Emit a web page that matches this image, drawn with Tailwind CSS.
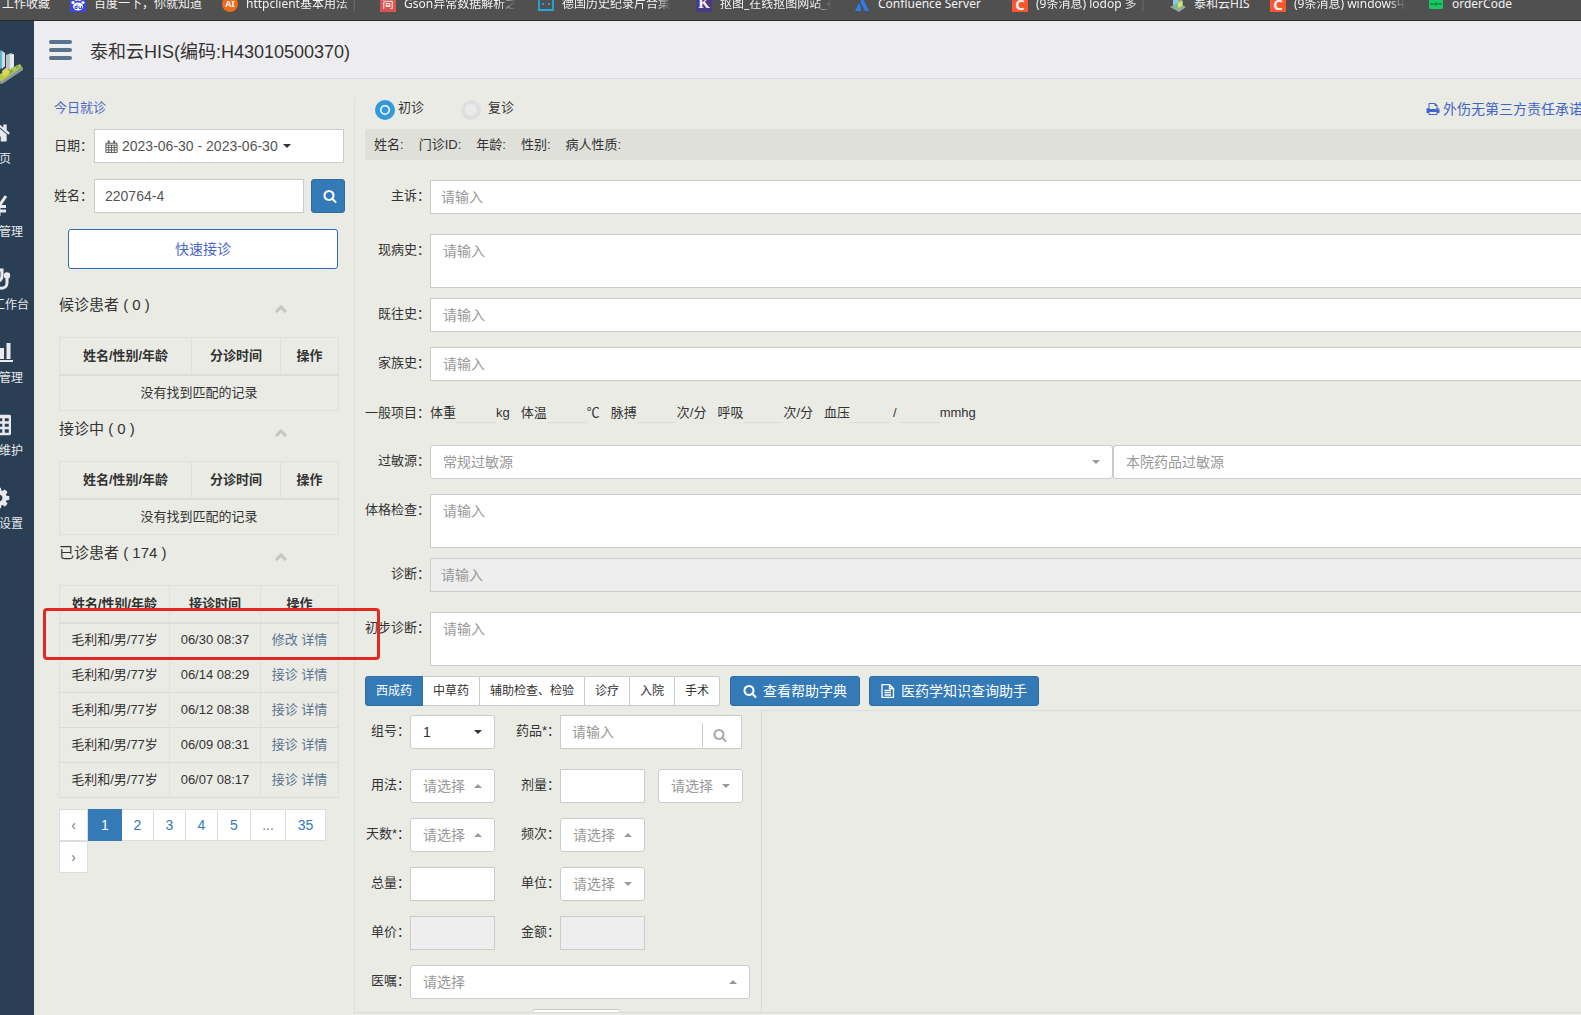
<!DOCTYPE html>
<html lang="zh-CN">
<head>
<meta charset="utf-8">
<meta name="viewport" content="width=device-width, initial-scale=1">
<title>泰和云HIS</title>
<script src="https://cdn.jsdelivr.net/npm/@tailwindcss/browser@4"></script>
</head>
<body class="min-h-screen flex flex-col overflow-x-hidden bg-[#eaebe5] font-['Liberation_Sans','Noto_Sans_CJK_SC',sans-serif] text-[13px] leading-5 text-[#333]">

<svg class="hidden" aria-hidden="true">
  <symbol id="search" viewBox="0 0 1792 1792"><path fill="currentColor" d="M1216 832q0-185-131.500-316.500t-316.500-131.500-316.500 131.500-131.500 316.500 131.500 316.500 316.500 131.500 316.500-131.500 131.500-316.500zm512 832q0 52-38 90t-90 38q-54 0-90-38l-343-342q-179 124-399 124-143 0-273.500-55.500t-225-150-150-225-55.500-273.500 55.500-273.500 150-225 225-150 273.500-55.500 273.500 55.500 225 150 150 225 55.500 273.500q0 220-124 399l343 343q37 37 37 90z"/></symbol>
  <symbol id="down" viewBox="0 0 8 4"><path fill="currentColor" d="M0 0h8L4 4z"/></symbol>
  <symbol id="up" viewBox="0 0 8 4"><path fill="currentColor" d="M0 4h8L4 0z"/></symbol>
  <symbol id="chevron" viewBox="0 0 12 8"><path fill="none" stroke="currentColor" stroke-width="3" d="M1 7l5-5 5 5"/></symbol>
  <symbol id="city" viewBox="0 0 24 36"><path fill="#8f979c" d="M-8 33l31-15v3L2 35z"/><path fill="#b5c94f" d="M-8 29L20 15l2 3L2 32z"/><path fill="#e2d552" d="M2 22l5-4 3 6-7 4z"/><path fill="#7fae46" d="M10 20l4 2-5 4zM16 16l4 2-4 2z"/><path fill="#5db4cf" d="M-4 4l6-3v18l-6 4z"/><path fill="#d3dbe0" d="M2 2l3 2v13l-3 3z"/><path fill="#b9c3ca" d="M6 6l5-2 3 2v12l-4 3-4-2z"/><path fill="#e6eaed" d="M10 6l4-1v12l-4 3z"/></symbol>
</svg>

<!-- browser bookmarks -->
<nav class="h-[21px] shrink-0 overflow-hidden border-b border-[#2a2a2a] bg-[#505050] font-['Noto_Sans','Noto_Sans_CJK_SC',sans-serif] text-xs text-[#f2f2f2]">
  <div class="-mt-3 flex h-8 items-center whitespace-nowrap">
    <a href="#" class="w-[70px] shrink-0 pl-0.5">工作收藏</a>
    <a href="#" class="flex w-[152px] shrink-0 items-center gap-2">
      <svg class="size-4 shrink-0" viewBox="0 0 16 16"><rect width="16" height="16" rx="1" fill="#3a49d8"/><ellipse cx="8" cy="10.500" rx="5" ry="4" fill="#fff"/><circle cx="3" cy="6.500" r="1.600" fill="#fff"/><circle cx="6.300" cy="3.500" r="1.600" fill="#fff"/><circle cx="9.700" cy="3.500" r="1.600" fill="#fff"/><circle cx="13" cy="6.500" r="1.600" fill="#fff"/><path stroke="#3a49d8" fill="none" d="M7 8.500v4H5v-2h2M9 10v2.500h2.500V10"/></svg>
      <span>百度一下，你就知道</span></a>
    <a href="#" class="flex w-[158px] shrink-0 items-center gap-2">
      <span class="flex size-4 shrink-0 items-center justify-center rounded-full bg-[#ee6b1a] text-[9px] font-bold">AI</span>
      <span class="w-[112px] overflow-hidden [mask-image:linear-gradient(to_right,black_85%,transparent)]">httpclient基本用法 | </span></a>
    <a href="#" class="flex w-[158px] shrink-0 items-center gap-2">
      <span class="flex size-4 shrink-0 items-center justify-center bg-[#d9544f] text-xs">简</span>
      <span class="w-[112px] overflow-hidden [mask-image:linear-gradient(to_right,black_85%,transparent)]">Gson异常数据解析之</span></a>
    <a href="#" class="flex w-[158px] shrink-0 items-center gap-2">
      <svg class="size-4 shrink-0" viewBox="0 0 16 16"><path fill="none" stroke="#27a5dc" stroke-width="1.800" d="M1 3h14v11H1zM4 0l2 3M12 0l-2 3M5 7v2M11 7v2"/></svg>
      <span class="w-[110px] overflow-hidden [mask-image:linear-gradient(to_right,black_85%,transparent)]">德国历史纪录片合集</span></a>
    <a href="#" class="flex w-[158px] shrink-0 items-center gap-2">
      <span class="flex size-4 shrink-0 items-center justify-center bg-[#4b3a86] font-['Liberation_Serif',serif] text-[15px] font-bold">K</span>
      <span class="w-[112px] overflow-hidden [mask-image:linear-gradient(to_right,black_85%,transparent)]">抠图_在线抠图网站_在</span></a>
    <a href="#" class="flex w-[158px] shrink-0 items-center gap-2">
      <svg class="size-4 shrink-0" viewBox="0 0 16 16"><path fill="#2f7cf0" d="M8 1c-2 3-1.500 5 0 8l3 6h4zM5 7L1 15h6c0-3-.500-6-2-8z"/></svg>
      <span>Confluence Server</span></a>
    <a href="#" class="flex w-[158px] shrink-0 items-center gap-2">
      <span class="flex size-4 shrink-0 items-center justify-center bg-[#fc5531] text-[15px] font-bold">C</span>
      <span class="w-[110px] overflow-hidden [mask-image:linear-gradient(to_right,black_85%,transparent)]">(9条消息) lodop 多 |</span></a>
    <a href="#" class="flex w-[100px] shrink-0 items-center gap-2">
      <svg class="size-4 shrink-0" viewBox="0 0 16 16"><path fill="#9aa5a8" d="M0 11l8-4 8 4-7 5z"/><path fill="#7cbf8a" d="M3 4l5-2 5 3v6l-5 3-5-4z"/><path fill="#e6dd62" d="M8 7l4-2v5l-4 2z"/><path fill="#8cc8e8" d="M3 3l5-2v6L3 9z"/></svg>
      <span>泰和云HIS</span></a>
    <a href="#" class="flex w-[158px] shrink-0 items-center gap-2">
      <span class="flex size-4 shrink-0 items-center justify-center bg-[#fc5531] text-[15px] font-bold">C</span>
      <span class="w-[112px] overflow-hidden [mask-image:linear-gradient(to_right,black_85%,transparent)]">(9条消息) windows中</span></a>
    <a href="#" class="flex shrink-0 items-center gap-2">
      <svg class="size-4 shrink-0" viewBox="0 0 16 16"><rect x="1" width="14" height="13" rx="2" fill="#18c765"/><path stroke="#0b7a3c" fill="none" d="M3 9V7l2 2V7M7 7h2v2H7zM11 9V7l2 2V7"/></svg>
      <span>orderCode</span></a>
  </div>
</nav>

<div class="flex flex-1">
  <!-- collapsed menu -->
  <aside class="w-[34px] shrink-0 overflow-hidden bg-[#2a3f54] text-xs leading-5 text-[#e7e9ee]">
    <svg class="mt-[28px] h-9 w-6"><use href="#city"/></svg>
    <ul class="mt-9 whitespace-nowrap">
      <li class="h-[73px]"><a href="#" class="block">
        <svg class="-ml-[13px] h-6 w-6" viewBox="0 0 1792 1792" fill="currentColor"><path d="M1472 992v480q0 26-19 45t-45 19h-384v-384h-256v384h-384q-26 0-45-19t-19-45v-480q0-1 .5-3t.5-3l575-474 575 474q1 2 1 6zm223-69l-62 74q-8 9-21 11h-3q-13 0-21-7l-692-577-692 577q-12 8-24 7-13-2-21-11l-62-74q-8-10-7-23.500t11-21.500l719-599q32-26 76-26t76 26l244 204v-195q0-14 9-23t23-9h192q14 0 23 9t9 23v408l219 182q10 8 11 21.500t-7 23.500z"/></svg>
        <span class="-ml-px mt-1 block">页</span></a></li>
      <li class="h-[73px]"><a href="#" class="block">
        <svg class="-ml-[13px] h-6 w-6" viewBox="0 0 24 24" fill="none" stroke="currentColor" stroke-width="3"><path d="M5 2l7 10 7-10M12 11v11M6 12.500h13M6 17h13"/></svg>
        <span class="-ml-px mt-1 block">管理</span></a></li>
      <li class="h-[73px]"><a href="#" class="block">
        <svg class="-ml-[13px] h-6 w-6" viewBox="0 0 24 24" fill="none" stroke="currentColor" stroke-width="3"><path d="M6 3H3v6a6 6 0 0012 0V3h-3M9 15v1c0 7 11 7 11 0v-5"/><circle cx="20" cy="8.500" r="1.700"/></svg>
        <span class="-ml-[7px] mt-1 block">工作台</span></a></li>
      <li class="h-[73px]"><a href="#" class="block">
        <svg class="-ml-[11px] h-6 w-6" viewBox="0 0 24 24" fill="currentColor"><path d="M0 20h24v2H0zM5 12h3v7H5zM11 8h4v11h-4zM17.500 3h4v16h-4z"/></svg>
        <span class="-ml-px mt-1 block">管理</span></a></li>
      <li class="h-[73px]"><a href="#" class="block">
        <svg class="-ml-[13px] h-6 w-6" viewBox="0 0 24 24" fill="none" stroke="currentColor" stroke-width="2.500"><rect x="1" y="3" width="22" height="18" rx="1"/><path d="M1 4h22M1 9.500h22M1 15h22M9 3v18M16.500 3v18"/></svg>
        <span class="-ml-px mt-1 block">维护</span></a></li>
      <li class="h-[73px]"><a href="#" class="block">
        <svg class="-ml-[13px] h-6 w-6" viewBox="0 0 1792 1792" fill="currentColor"><path d="M1152 896q0-106-75-181t-181-75-181 75-75 181 75 181 181 75 181-75 75-181zm512-109v222q0 12-8 23t-20 13l-185 28q-19 54-39 91 35 50 107 138 10 12 10 25t-9 23q-27 37-99 108t-94 71q-12 0-26-9l-138-108q-44 23-91 38-16 136-29 186-7 28-36 28h-222q-14 0-24.500-8.500t-11.500-21.500l-28-184q-49-16-90-37l-141 107q-10 9-25 9-14 0-25-11-126-114-165-168-7-10-7-23 0-12 8-23 15-21 51-66.500t54-70.500q-27-50-41-99l-183-27q-13-2-21-12.500t-8-23.500v-222q0-12 8-23t19-13l186-28q14-46 39-92-40-57-107-138-10-12-10-24 0-10 9-23 26-36 98.500-107.500t94.500-71.500q13 0 26 10l138 107q44-23 91-38 16-136 29-186 7-28 36-28h222q14 0 24.500 8.500t11.500 21.500l28 184q49 16 90 37l142-107q9-9 24-9 13 0 25 10 129 119 165 170 7 8 7 22 0 12-8 23-15 21-51 66.500t-54 70.500q26 50 41 98l183 28q13 2 21 12.500t8 23.500z"/></svg>
        <span class="-ml-px mt-1 block">设置</span></a></li>
    </ul>
  </aside>

  <div class="flex min-w-0 flex-1 flex-col">
    <header class="flex h-[58px] shrink-0 items-center gap-[18px] border-b border-[#d9dee4] bg-[#ededef] pl-[15px]">
      <button type="button" aria-label="菜单" class="flex w-[23px] flex-col gap-1">
        <span class="h-1 rounded-sm bg-[#5a738e]"></span><span class="h-1 rounded-sm bg-[#5a738e]"></span><span class="h-1 rounded-sm bg-[#5a738e]"></span>
      </button>
      <h1 class="mt-1 text-lg">泰和云HIS(编码:H43010500370)</h1>
    </header>

    <div class="flex flex-1">
      <!-- patient queue -->
      <section class="w-[321px] shrink-0 pt-[19px]">
        <div class="h-full border-r border-[#dedfd9] pl-[25px] pr-[15px]">
          <a href="#" class="-ml-[5px] block text-[#4a66c8]">今日就诊</a>
          <div class="-ml-[5px] -mr-[5px] mt-[11px] flex items-center">
            <span class="w-10">日期：</span>
            <button type="button" class="flex h-[34px] flex-1 items-center border border-[#ccc] bg-white pl-[10px] text-sm text-[#555]">
              <svg class="mr-[4px] size-[13px]" viewBox="0 0 13 14" fill="none" stroke="currentColor"><path d="M.5 3.500h12v10H.5zM.5 5.500h12M.5 8h12M.5 10.700h12M3.500 5.500v8M6.500 5.500v8M9.500 5.500v8"/><path stroke-width="2" d="M3.500.5v3M9.500.5v3"/></svg>
              2023-06-30 - 2023-06-30
              <svg class="ml-[5px] h-1 w-2 text-[#333]"><use href="#down"/></svg>
            </button>
          </div>
          <div class="-ml-[5px] -mr-[6px] mt-4 flex items-center">
            <label for="pname" class="w-10">姓名：</label>
            <input id="pname" value="220764-4" class="h-[34px] min-w-0 flex-1 border border-[#ccc] bg-white px-[10px] text-sm text-[#555]">
            <button type="button" aria-label="搜索" class="ml-[7px] flex size-[34px] items-center justify-center rounded-[3px] border border-[#2e6da4] bg-[#337ab7] pl-1 text-white"><svg class="size-[14px]"><use href="#search"/></svg></button>
          </div>
          <button type="button" class="ml-[9px] mt-4 block h-10 w-[270px] rounded-[3px] border border-[#3468b8] bg-white text-sm text-[#4a66c8]">快速接诊</button>

          <div class="mt-[26px] flex h-5 items-center text-[15px]"><h2>候诊患者 ( 0 )</h2><svg class="ml-auto mr-[52px] mt-2 h-2 w-3 text-[#c4c5c2]"><use href="#chevron"/></svg></div>
          <table class="mt-[22px] w-full table-fixed border-collapse border border-[#dfe0da] text-center">
            <thead><tr class="h-[37px] border-b-2 border-[#dcddd7]"><th class="w-[132px] border-r border-[#dfe0da]">姓名/性别/年龄</th><th class="w-[89px] border-r border-[#dfe0da]">分诊时间</th><th>操作</th></tr></thead>
            <tbody><tr class="h-9"><td colspan="3">没有找到匹配的记录</td></tr></tbody>
          </table>

          <div class="mt-2 flex h-5 items-center text-[15px]"><h2>接诊中 ( 0 )</h2><svg class="ml-auto mr-[52px] mt-2 h-2 w-3 text-[#c4c5c2]"><use href="#chevron"/></svg></div>
          <table class="mt-[22px] w-full table-fixed border-collapse border border-[#dfe0da] text-center">
            <thead><tr class="h-[37px] border-b-2 border-[#dcddd7]"><th class="w-[132px] border-r border-[#dfe0da]">姓名/性别/年龄</th><th class="w-[89px] border-r border-[#dfe0da]">分诊时间</th><th>操作</th></tr></thead>
            <tbody><tr class="h-9"><td colspan="3">没有找到匹配的记录</td></tr></tbody>
          </table>

          <div class="mt-2 flex h-5 items-center text-[15px]"><h2>已诊患者 ( 174 )</h2><svg class="ml-auto mr-[52px] mt-2 h-2 w-3 text-[#c4c5c2]"><use href="#chevron"/></svg></div>
          <div class="relative mt-[22px]">
            <table class="w-full table-fixed border-collapse border border-[#dfe0da] text-center">
              <thead><tr class="h-[37px] border-b-2 border-[#dcddd7]"><th class="w-[110px] border-r border-[#dfe0da]">姓名/性别/年龄</th><th class="w-[91px] border-r border-[#dfe0da]">接诊时间</th><th>操作</th></tr></thead>
              <tbody>
                <tr class="h-[35px] border-b border-[#dcddd7]"><td class="border-r border-[#dfe0da]">毛利和/男/77岁</td><td class="border-r border-[#dfe0da]">06/30 08:37</td><td class="text-[#5a738e]"><a href="#">修改</a> <a href="#">详情</a></td></tr>
                <tr class="h-[35px] border-b border-[#dcddd7]"><td class="border-r border-[#dfe0da]">毛利和/男/77岁</td><td class="border-r border-[#dfe0da]">06/14 08:29</td><td class="text-[#5a738e]"><a href="#">接诊</a> <a href="#">详情</a></td></tr>
                <tr class="h-[35px] border-b border-[#dcddd7]"><td class="border-r border-[#dfe0da]">毛利和/男/77岁</td><td class="border-r border-[#dfe0da]">06/12 08:38</td><td class="text-[#5a738e]"><a href="#">接诊</a> <a href="#">详情</a></td></tr>
                <tr class="h-[35px] border-b border-[#dcddd7]"><td class="border-r border-[#dfe0da]">毛利和/男/77岁</td><td class="border-r border-[#dfe0da]">06/09 08:31</td><td class="text-[#5a738e]"><a href="#">接诊</a> <a href="#">详情</a></td></tr>
                <tr class="h-[35px] border-b border-[#dcddd7]"><td class="border-r border-[#dfe0da]">毛利和/男/77岁</td><td class="border-r border-[#dfe0da]">06/07 08:17</td><td class="text-[#5a738e]"><a href="#">接诊</a> <a href="#">详情</a></td></tr>
              </tbody>
            </table>
            <div class="pointer-events-none absolute -left-4 top-[23px] z-10 h-[52px] w-[337px] rounded border-3 border-[#e3291f]"></div>
          </div>
          <nav class="mt-[11px] flex flex-wrap text-sm text-[#337ab7]">
            <a href="#" class="flex h-8 w-[29px] items-center justify-center border border-[#ddd] bg-white text-[#777]">‹</a>
            <a href="#" class="flex h-8 w-[34px] items-center justify-center bg-[#337ab7] text-white">1</a>
            <a href="#" class="flex h-8 w-8 items-center justify-center border-y border-r border-[#ddd] bg-white">2</a>
            <a href="#" class="flex h-8 w-8 items-center justify-center border-y border-r border-[#ddd] bg-white">3</a>
            <a href="#" class="flex h-8 w-8 items-center justify-center border-y border-r border-[#ddd] bg-white">4</a>
            <a href="#" class="flex h-8 w-[33px] items-center justify-center border-y border-r border-[#ddd] bg-white">5</a>
            <a href="#" class="flex h-8 w-[35px] items-center justify-center border-y border-r border-[#ddd] bg-white text-[#777]">...</a>
            <a href="#" class="flex h-8 w-10 items-center justify-center border-y border-r border-[#ddd] bg-white">35</a>
            <a href="#" class="flex h-8 w-[29px] items-center justify-center border border-[#ddd] bg-white text-[#777]">›</a>
          </nav>
        </div>
      </section>

      <!-- medical record -->
      <main class="flex min-w-0 flex-1 flex-col pl-[10px]">
        <div class="mt-[19px] flex h-[31px] items-start">
          <label class="ml-[10px] flex h-5 items-center gap-[3px]"><input type="radio" name="visit" checked class="mt-[3px] size-5 appearance-none rounded-full border-[5px] border-[#3498db] bg-[radial-gradient(circle,#3498db_3px,white_4px)]">初诊</label>
          <label class="ml-[37px] flex h-5 items-center gap-[7px]"><input type="radio" name="visit" class="mt-[3px] size-5 appearance-none rounded-full border-4 border-[#dddfe0] bg-[#eaebe8]">复诊</label>
          <a href="#" class="ml-auto -mr-0.5 mt-[1px] flex items-center gap-[3px] whitespace-nowrap text-sm text-[#3f66c4]">
            <svg class="size-[14px]" viewBox="0 0 1792 1792" fill="currentColor"><path d="M448 1536h896v-256h-896v256zm0-640h896v-384h-160q-40 0-68-28t-28-68v-160h-640v640zm1152 64q0-26-19-45t-45-19-45 19-19 45 19 45 45 19 45-19 19-45zm128 0v416q0 13-9.500 22.500t-22.500 9.500h-224v160q0 40-28 68t-68 28h-960q-40 0-68-28t-28-68v-160h-224q-13 0-22.500-9.500t-9.500-22.500v-416q0-79 56.500-135.500t135.500-56.500h64v-544q0-40 28-68t68-28h672q40 0 88 20t76 48l152 152q28 28 48 76t20 88v256h64q79 0 135.500 56.500t56.500 135.500z"/></svg>外伤无第三方责任承诺</a>
        </div>
        <div class="flex h-[31px] items-center gap-[15px] bg-[#dfe0da] pl-[9px]"><span>姓名:</span><span>门诊ID:</span><span>年龄:</span><span>性别:</span><span>病人性质:</span></div>

        <div class="mt-5 flex"><label for="f1" class="w-[65px] shrink-0 pt-[6px] text-right">主诉：</label><input id="f1" placeholder="请输入" class="h-[34px] min-w-0 flex-1 border border-r-0 border-[#ccc] bg-white px-[10px] text-sm placeholder:text-[#999]"></div>
        <div class="mt-5 flex"><label for="f2" class="w-[65px] shrink-0 pt-[6px] text-right">现病史：</label><textarea id="f2" placeholder="请输入" class="h-[54px] min-w-0 flex-1 resize-none border border-r-0 border-[#ccc] bg-white px-3 py-[6px] text-sm placeholder:text-[#999]"></textarea></div>
        <div class="mt-[10px] flex"><label for="f3" class="w-[65px] shrink-0 pt-[6px] text-right">既往史：</label><input id="f3" placeholder="请输入" class="h-[34px] min-w-0 flex-1 border border-r-0 border-[#ccc] bg-white px-3 text-sm placeholder:text-[#999]"></div>
        <div class="mt-[15px] flex"><label for="f4" class="w-[65px] shrink-0 pt-[6px] text-right">家族史：</label><input id="f4" placeholder="请输入" class="h-[34px] min-w-0 flex-1 border border-r-0 border-[#ccc] bg-white px-3 text-sm placeholder:text-[#999]"></div>
        <div class="mt-[15px] flex h-[34px] items-center whitespace-nowrap">
          <span class="w-[65px] shrink-0 text-right">一般项目：</span>
          <label class="flex items-center">体重<input class="h-5 w-10 border-b border-[#dcddd7]"></label><span class="mr-[11px]">kg</span>
          <label class="flex items-center">体温<input class="h-5 w-10 border-b border-[#dcddd7]"></label><span class="mr-[11px]">℃</span>
          <label class="flex items-center">脉搏<input class="h-5 w-10 border-b border-[#dcddd7]"></label><span class="mr-[11px]">次/分</span>
          <label class="flex items-center">呼吸<input class="h-5 w-10 border-b border-[#dcddd7]"></label><span class="mr-[11px]">次/分</span>
          <label class="flex items-center">血压<input class="h-5 w-10 border-b border-[#dcddd7]"></label><span class="mx-[3px]">/</span>
          <input aria-label="血压" class="h-5 w-10 border-b border-[#dcddd7]"><span>mmhg</span>
        </div>
        <div class="mt-[15px] flex"><label for="f5" class="w-[65px] shrink-0 pt-[6px] text-right">过敏源：</label>
          <div class="grid flex-1 grid-cols-[683fr_468fr]">
            <div class="relative"><select id="f5" class="h-[34px] w-full appearance-none rounded-[3px] border border-[#ccc] bg-white px-3 text-sm text-[#999]"><option>常规过敏源</option></select><svg class="pointer-events-none absolute right-[13px] top-[15px] h-1 w-2 text-[#999]"><use href="#down"/></svg></div>
            <select aria-label="本院药品过敏源" class="h-[34px] w-full appearance-none rounded-l-[3px] border border-r-0 border-[#ccc] bg-white px-3 text-sm text-[#999]"><option>本院药品过敏源</option></select>
          </div></div>
        <div class="mt-[15px] flex"><label for="f6" class="w-[65px] shrink-0 pt-[6px] text-right">体格检查：</label><textarea id="f6" placeholder="请输入" class="h-[54px] min-w-0 flex-1 resize-none border border-r-0 border-[#ccc] bg-white px-3 py-[6px] text-sm placeholder:text-[#999]"></textarea></div>
        <div class="mt-[10px] flex"><label for="f7" class="w-[65px] shrink-0 pt-[6px] text-right">诊断：</label><input id="f7" readonly placeholder="请输入" class="h-[34px] min-w-0 flex-1 border border-r-0 border-[#ccc] bg-[#eee] px-[10px] text-sm placeholder:text-[#999]"></div>
        <div class="mt-5 flex"><label for="f8" class="w-[65px] shrink-0 pt-[6px] text-right">初步诊断：</label><textarea id="f8" placeholder="请输入" class="h-[54px] min-w-0 flex-1 resize-none border border-r-0 border-[#ccc] bg-white px-3 py-[6px] text-sm placeholder:text-[#999]"></textarea></div>

        <div class="mt-[10px] flex h-[30px] whitespace-nowrap text-xs">
          <button type="button" class="rounded-l-[3px] border border-[#2e6da4] bg-[#337ab7] px-[10px] text-white">西成药</button>
          <button type="button" class="border-y border-r border-[#ccc] bg-white px-[10px]">中草药</button>
          <button type="button" class="border-y border-r border-[#ccc] bg-white px-[10px]">辅助检查、检验</button>
          <button type="button" class="border-y border-r border-[#ccc] bg-white px-[10px]">诊疗</button>
          <button type="button" class="border-y border-r border-[#ccc] bg-white px-[10px]">入院</button>
          <button type="button" class="rounded-r-[3px] border-y border-r border-[#ccc] bg-white px-[10px]">手术</button>
          <button type="button" class="ml-[10px] flex items-center gap-[6px] rounded-[3px] border border-[#2e6da4] bg-[#337ab7] px-3 text-sm text-white"><svg class="size-[14px]"><use href="#search"/></svg>查看帮助字典</button>
          <button type="button" class="ml-[9px] flex items-center gap-[6px] rounded-[3px] border border-[#2e6da4] bg-[#337ab7] px-[11px] text-sm text-white"><svg class="size-[14px]" viewBox="0 0 14 14" fill="none" stroke="currentColor" stroke-width="1.300"><path d="M1 .7h7.500L12.500 4.500v8.800H1zM8.500.7v3.800h4M3.500 6.500h6.500M3.500 8.700h6.500M3.500 11h6.500"/></svg>医药学知识查询助手</button>
        </div>

        <!-- prescription form -->
        <div class="-ml-[10px] mt-1 flex flex-1">
          <div class="flex h-[303px] w-[407px] shrink-0 flex-col overflow-hidden border-b border-r border-[#d9dad4] pt-[5px]">
            <div class="flex">
              <label for="g1" class="w-[55px] pt-[6px] text-right">组号：</label>
              <div class="relative"><select id="g1" class="h-[34px] w-[85px] appearance-none rounded-[3px] border border-[#ccc] bg-white pl-3 text-sm"><option>1</option></select><svg class="pointer-events-none absolute right-[13px] top-[15px] h-1 w-2"><use href="#down"/></svg></div>
              <label for="g2" class="w-[65px] pt-[6px] text-right">药品*：</label>
              <div class="relative"><input id="g2" placeholder="请输入" class="h-[34px] w-[182px] border border-[#ccc] bg-white pl-[11px] pr-11 text-sm placeholder:text-[#999]"><button type="button" aria-label="搜索药品" class="absolute right-px top-[8px] flex h-6 w-[39px] items-center border-l border-[#ccc] pl-[10px] text-[#aaa]"><svg class="size-[14px]"><use href="#search"/></svg></button></div>
            </div>
            <div class="mt-5 flex">
              <label for="g3" class="w-[55px] pt-[6px] text-right">用法：</label>
              <div class="relative"><select id="g3" class="h-[34px] w-[85px] appearance-none rounded-[3px] border border-[#ccc] bg-white pl-3 text-sm text-[#999]"><option>请选择</option></select><svg class="pointer-events-none absolute right-[13px] top-[15px] h-1 w-2 text-[#999]"><use href="#up"/></svg></div>
              <label for="g4" class="w-[65px] pt-[6px] text-right">剂量：</label>
              <input id="g4" class="h-[34px] w-[85px] border border-[#ccc] bg-white px-3 text-sm">
              <div class="relative ml-[13px]"><select aria-label="剂量单位" class="h-[34px] w-[85px] appearance-none rounded-[3px] border border-[#ccc] bg-white pl-3 text-sm text-[#999]"><option>请选择</option></select><svg class="pointer-events-none absolute right-[13px] top-[15px] h-1 w-2 text-[#999]"><use href="#down"/></svg></div>
            </div>
            <div class="mt-[15px] flex">
              <label for="g5" class="w-[55px] whitespace-nowrap pt-[6px] text-right">天数*：</label>
              <div class="relative"><select id="g5" class="h-[34px] w-[85px] appearance-none rounded-[3px] border border-[#ccc] bg-white pl-3 text-sm text-[#999]"><option>请选择</option></select><svg class="pointer-events-none absolute right-[13px] top-[15px] h-1 w-2 text-[#999]"><use href="#up"/></svg></div>
              <label for="g6" class="w-[65px] pt-[6px] text-right">频次：</label>
              <div class="relative"><select id="g6" class="h-[34px] w-[85px] appearance-none rounded-[3px] border border-[#ccc] bg-white pl-3 text-sm text-[#999]"><option>请选择</option></select><svg class="pointer-events-none absolute right-[13px] top-[15px] h-1 w-2 text-[#999]"><use href="#up"/></svg></div>
            </div>
            <div class="mt-[15px] flex">
              <label for="g7" class="w-[55px] pt-[6px] text-right">总量：</label>
              <input id="g7" class="h-[34px] w-[85px] border border-[#ccc] bg-white px-3 text-sm">
              <label for="g8" class="w-[65px] pt-[6px] text-right">单位：</label>
              <div class="relative"><select id="g8" class="h-[34px] w-[85px] appearance-none rounded-[3px] border border-[#ccc] bg-white pl-3 text-sm text-[#999]"><option>请选择</option></select><svg class="pointer-events-none absolute right-[13px] top-[15px] h-1 w-2 text-[#999]"><use href="#down"/></svg></div>
            </div>
            <div class="mt-[15px] flex">
              <label for="g9" class="w-[55px] pt-[6px] text-right">单价：</label>
              <input id="g9" readonly class="h-[34px] w-[85px] border border-[#ccc] bg-[#eee] px-3 text-sm">
              <label for="g10" class="w-[65px] pt-[6px] text-right">金额：</label>
              <input id="g10" readonly class="h-[34px] w-[85px] border border-[#ccc] bg-[#eee] px-3 text-sm">
            </div>
            <div class="mt-[15px] flex">
              <label for="g11" class="w-[55px] pt-[6px] text-right">医嘱：</label>
              <div class="relative"><select id="g11" class="h-[34px] w-[340px] appearance-none rounded-[3px] border border-[#ccc] bg-white pl-3 text-sm text-[#999]"><option>请选择</option></select><svg class="pointer-events-none absolute right-[13px] top-[15px] h-1 w-2 text-[#999]"><use href="#up"/></svg></div>
            </div>
            <button type="button" aria-label="添加" class="ml-[177px] mt-[10px] h-[30px] w-[89px] shrink-0 rounded-[3px] border border-[#ccc] bg-white"></button>
          </div>
          <div class="h-[303px] flex-1 border-b border-t border-[#dcddd8]"></div>
        </div>
      </main>
    </div>
  </div>
</div>
</body>
</html>
